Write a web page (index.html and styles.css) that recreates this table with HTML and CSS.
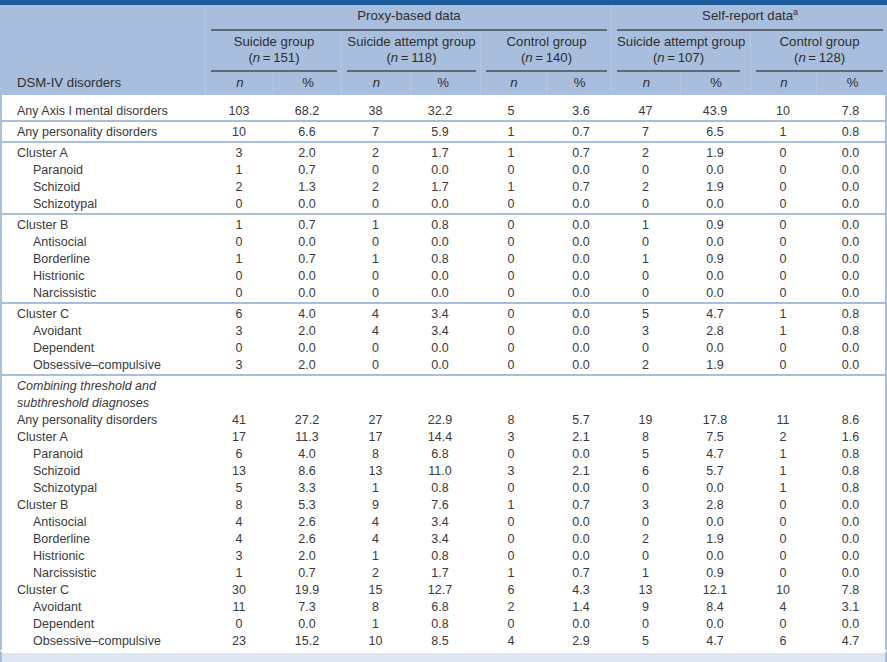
FILE: index.html
```html
<!DOCTYPE html>
<html lang="en">
<head>
<meta charset="utf-8">
<title>DSM-IV disorders table</title>
<link rel="stylesheet" href="styles.css">
</head>
<body>
<div class="page">
<table class="tbl">
<colgroup>
<col class="w-lab"><col class="w68"><col class="w68"><col class="w69"><col class="w70"><col class="w66"><col class="w65"><col class="w69"><col class="w70"><col class="w66"><col class="w71">
</colgroup>
<thead>
<tr class="h1">
<th class="lab"></th>
<th colspan="6"><div class="rule">Proxy-based data</div></th>
<th colspan="4"><div class="rule">Self-report data<sup>a</sup></div></th>
</tr>
<tr class="h2">
<th class="lab"></th>
<th colspan="2"><div class="rule">Suicide group<br>(<i>n</i>&#8201;=&#8201;151)</div></th>
<th colspan="2"><div class="rule">Suicide attempt group<br>(<i>n</i>&#8201;=&#8201;118)</div></th>
<th colspan="2"><div class="rule">Control group<br>(<i>n</i>&#8201;=&#8201;140)</div></th>
<th colspan="2"><div class="rule">Suicide attempt group<br>(<i>n</i>&#8201;=&#8201;107)</div></th>
<th colspan="2"><div class="rule">Control group<br>(<i>n</i>&#8201;=&#8201;128)</div></th>
</tr>
<tr class="h3">
<th class="lab">DSM-IV disorders</th>
<th><i>n</i></th><th>%</th><th><i>n</i></th><th>%</th><th><i>n</i></th><th>%</th><th><i>n</i></th><th>%</th><th><i>n</i></th><th>%</th>
</tr>
</thead>
<tbody class="grp first">
<tr><td class="lab">Any Axis I mental disorders</td><td>103</td><td>68.2</td><td>38</td><td>32.2</td><td>5</td><td>3.6</td><td>47</td><td>43.9</td><td>10</td><td>7.8</td></tr>
</tbody>
<tbody class="grp">
<tr><td class="lab">Any personality disorders</td><td>10</td><td>6.6</td><td>7</td><td>5.9</td><td>1</td><td>0.7</td><td>7</td><td>6.5</td><td>1</td><td>0.8</td></tr>
</tbody>
<tbody class="grp">
<tr><td class="lab">Cluster A</td><td>3</td><td>2.0</td><td>2</td><td>1.7</td><td>1</td><td>0.7</td><td>2</td><td>1.9</td><td>0</td><td>0.0</td></tr>
<tr><td class="lab ind">Paranoid</td><td>1</td><td>0.7</td><td>0</td><td>0.0</td><td>0</td><td>0.0</td><td>0</td><td>0.0</td><td>0</td><td>0.0</td></tr>
<tr><td class="lab ind">Schizoid</td><td>2</td><td>1.3</td><td>2</td><td>1.7</td><td>1</td><td>0.7</td><td>2</td><td>1.9</td><td>0</td><td>0.0</td></tr>
<tr><td class="lab ind">Schizotypal</td><td>0</td><td>0.0</td><td>0</td><td>0.0</td><td>0</td><td>0.0</td><td>0</td><td>0.0</td><td>0</td><td>0.0</td></tr>
</tbody>
<tbody class="grp">
<tr><td class="lab">Cluster B</td><td>1</td><td>0.7</td><td>1</td><td>0.8</td><td>0</td><td>0.0</td><td>1</td><td>0.9</td><td>0</td><td>0.0</td></tr>
<tr><td class="lab ind">Antisocial</td><td>0</td><td>0.0</td><td>0</td><td>0.0</td><td>0</td><td>0.0</td><td>0</td><td>0.0</td><td>0</td><td>0.0</td></tr>
<tr><td class="lab ind">Borderline</td><td>1</td><td>0.7</td><td>1</td><td>0.8</td><td>0</td><td>0.0</td><td>1</td><td>0.9</td><td>0</td><td>0.0</td></tr>
<tr><td class="lab ind">Histrionic</td><td>0</td><td>0.0</td><td>0</td><td>0.0</td><td>0</td><td>0.0</td><td>0</td><td>0.0</td><td>0</td><td>0.0</td></tr>
<tr><td class="lab ind">Narcissistic</td><td>0</td><td>0.0</td><td>0</td><td>0.0</td><td>0</td><td>0.0</td><td>0</td><td>0.0</td><td>0</td><td>0.0</td></tr>
</tbody>
<tbody class="grp">
<tr><td class="lab">Cluster C</td><td>6</td><td>4.0</td><td>4</td><td>3.4</td><td>0</td><td>0.0</td><td>5</td><td>4.7</td><td>1</td><td>0.8</td></tr>
<tr><td class="lab ind">Avoidant</td><td>3</td><td>2.0</td><td>4</td><td>3.4</td><td>0</td><td>0.0</td><td>3</td><td>2.8</td><td>1</td><td>0.8</td></tr>
<tr><td class="lab ind">Dependent</td><td>0</td><td>0.0</td><td>0</td><td>0.0</td><td>0</td><td>0.0</td><td>0</td><td>0.0</td><td>0</td><td>0.0</td></tr>
<tr><td class="lab ind">Obsessive–compulsive</td><td>3</td><td>2.0</td><td>0</td><td>0.0</td><td>0</td><td>0.0</td><td>2</td><td>1.9</td><td>0</td><td>0.0</td></tr>
</tbody>
<tbody class="comb">
<tr><td class="lab note">Combining threshold and</td><td></td><td></td><td></td><td></td><td></td><td></td><td></td><td></td><td></td><td></td></tr>
<tr><td class="lab note">subthreshold diagnoses</td><td></td><td></td><td></td><td></td><td></td><td></td><td></td><td></td><td></td><td></td></tr>
<tr><td class="lab">Any personality disorders</td><td>41</td><td>27.2</td><td>27</td><td>22.9</td><td>8</td><td>5.7</td><td>19</td><td>17.8</td><td>11</td><td>8.6</td></tr>
<tr><td class="lab">Cluster A</td><td>17</td><td>11.3</td><td>17</td><td>14.4</td><td>3</td><td>2.1</td><td>8</td><td>7.5</td><td>2</td><td>1.6</td></tr>
<tr><td class="lab ind">Paranoid</td><td>6</td><td>4.0</td><td>8</td><td>6.8</td><td>0</td><td>0.0</td><td>5</td><td>4.7</td><td>1</td><td>0.8</td></tr>
<tr><td class="lab ind">Schizoid</td><td>13</td><td>8.6</td><td>13</td><td>11.0</td><td>3</td><td>2.1</td><td>6</td><td>5.7</td><td>1</td><td>0.8</td></tr>
<tr><td class="lab ind">Schizotypal</td><td>5</td><td>3.3</td><td>1</td><td>0.8</td><td>0</td><td>0.0</td><td>0</td><td>0.0</td><td>1</td><td>0.8</td></tr>
<tr><td class="lab">Cluster B</td><td>8</td><td>5.3</td><td>9</td><td>7.6</td><td>1</td><td>0.7</td><td>3</td><td>2.8</td><td>0</td><td>0.0</td></tr>
<tr><td class="lab ind">Antisocial</td><td>4</td><td>2.6</td><td>4</td><td>3.4</td><td>0</td><td>0.0</td><td>0</td><td>0.0</td><td>0</td><td>0.0</td></tr>
<tr><td class="lab ind">Borderline</td><td>4</td><td>2.6</td><td>4</td><td>3.4</td><td>0</td><td>0.0</td><td>2</td><td>1.9</td><td>0</td><td>0.0</td></tr>
<tr><td class="lab ind">Histrionic</td><td>3</td><td>2.0</td><td>1</td><td>0.8</td><td>0</td><td>0.0</td><td>0</td><td>0.0</td><td>0</td><td>0.0</td></tr>
<tr><td class="lab ind">Narcissistic</td><td>1</td><td>0.7</td><td>2</td><td>1.7</td><td>1</td><td>0.7</td><td>1</td><td>0.9</td><td>0</td><td>0.0</td></tr>
<tr><td class="lab">Cluster C</td><td>30</td><td>19.9</td><td>15</td><td>12.7</td><td>6</td><td>4.3</td><td>13</td><td>12.1</td><td>10</td><td>7.8</td></tr>
<tr><td class="lab ind">Avoidant</td><td>11</td><td>7.3</td><td>8</td><td>6.8</td><td>2</td><td>1.4</td><td>9</td><td>8.4</td><td>4</td><td>3.1</td></tr>
<tr><td class="lab ind">Dependent</td><td>0</td><td>0.0</td><td>1</td><td>0.8</td><td>0</td><td>0.0</td><td>0</td><td>0.0</td><td>0</td><td>0.0</td></tr>
<tr><td class="lab ind">Obsessive–compulsive</td><td>23</td><td>15.2</td><td>10</td><td>8.5</td><td>4</td><td>2.9</td><td>5</td><td>4.7</td><td>6</td><td>4.7</td></tr>
</tbody>
<tfoot>
<tr><td class="lab"></td><td></td><td></td><td></td><td></td><td></td><td></td><td></td><td></td><td></td><td></td></tr>
</tfoot>
</table>
</div>
</body>
</html>
```

FILE: styles.css
```css
html, body {
  margin: 0;
  padding: 0;
  background: #ffffff;
}

body {
  font-family: "Liberation Sans", Arial, sans-serif;
  font-size: 12.5px;
  color: #3a3a3a;
}

.page {
  width: 887px;
  height: 662px;
  overflow: hidden;
  border-top: 5px solid #1d5c9b;
  box-sizing: border-box;
}

.tbl {
  width: 887px;
  border-spacing: 0;
  table-layout: fixed;
}

.w-lab { width: 205px; }
.w65 { width: 65px; }
.w66 { width: 66px; }
.w68 { width: 68px; }
.w69 { width: 69px; }
.w70 { width: 70px; }
.w71 { width: 71px; }

/* header */
thead th {
  background: #a8bedc;
  font-weight: normal;
  font-size: 13.2px;
  color: #2e2e2e;
  padding: 0 4px 0 5px;
  text-align: center;
  border-left: 1px solid #b6c8e1;
  white-space: nowrap;
}

thead th.lab {
  border-left: 0;
  text-align: left;
  padding-left: 17px;
}

.h1 th {
  padding-top: 2px;
  line-height: 17px;
}

.h1 .rule {
  padding-bottom: 5px;
  border-bottom: 2px solid #5d6977;
}

.h2 th {
  padding-top: 3px;
  line-height: 16px;
}

.h2 .rule {
  padding-bottom: 4px;
  border-bottom: 2px solid #5d6977;
}

.h3 th {
  padding-top: 2px;
  padding-bottom: 4px;
  line-height: 17px;
}

sup {
  font-size: 9px;
  line-height: 0;
  vertical-align: 5px;
}

/* body */
td {
  padding: 0;
  line-height: 17px;
  text-align: center;
  white-space: nowrap;
}

td.lab {
  text-align: left;
  padding-left: 15px;
  border-left: 2px solid #a8bedc;
}

td.lab.ind {
  padding-left: 31px;
}

td.note {
  font-style: italic;
}

td:last-child {
  border-right: 2px solid #a8bedc;
}

/* column centering tweaks */
tr > :nth-child(5) { padding-right: 10px; }
tr > :nth-child(6) { padding-right: 4px; }
tr > :nth-child(7) { padding-left: 5px; }

.grp tr:first-child td {
  padding-top: 2px;
}

.grp.first tr:first-child td {
  padding-top: 7.5px;
}

.grp tr:last-child td {
  border-bottom: 2px solid #a8bedc;
}

.comb tr:first-child td {
  padding-top: 2px;
}

tfoot td {
  padding: 0;
  height: 10px;
  border-top: 3px solid #ffffff;
  background: #dde7f3;
}
```
